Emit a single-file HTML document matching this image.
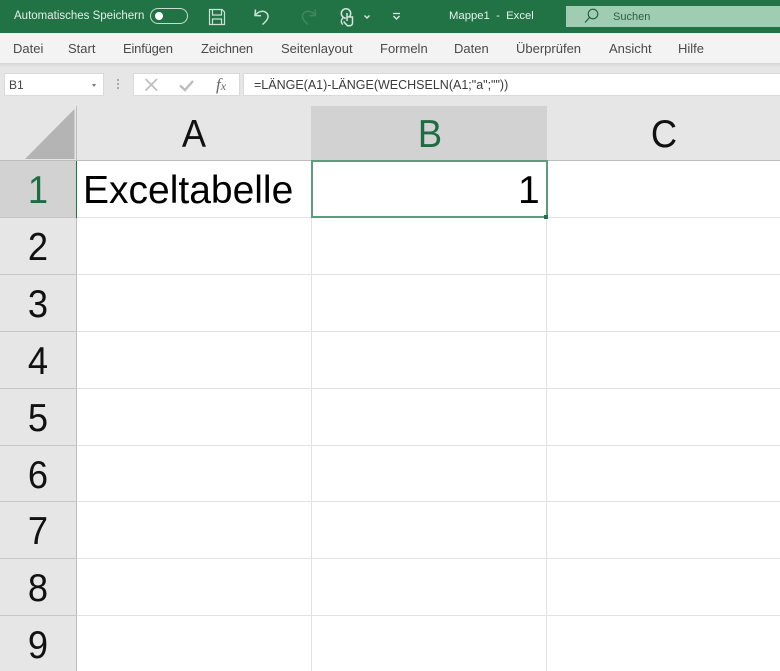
<!DOCTYPE html>
<html lang="de"><head><meta charset="utf-8"><title>Mappe1 - Excel</title>
<style>
*{box-sizing:border-box}
html,body{margin:0;padding:0}
body{width:780px;height:671px;overflow:hidden;position:relative;background:#fff;font-family:"Liberation Sans",sans-serif}
#w{position:absolute;left:0;top:0;width:780px;height:671px;overflow:hidden;filter:blur(.35px)}
.a{position:absolute}
.t{position:absolute;white-space:nowrap;line-height:1}
.tab{top:42px;font-size:13px;color:#4a4a4a}
.h{font-size:39px;color:#111;line-height:1;position:absolute;white-space:nowrap;transform:translateX(-50%) scaleX(.93)}
.rl{position:absolute;left:0;width:77px;height:1px;background:#c6c6c6}
.gl{position:absolute;left:77px;right:0;height:1px;background:#e2e2e2}
.vl{position:absolute;top:161px;bottom:0;width:1px;background:#e2e2e2}
</style></head><body><div id="w">
<div class="a" style="left:0;top:0;width:780px;height:33px;background:#217346"></div>
<div class="t" style="left:14px;top:11px;font-size:11.500px;color:#e4eee8">Automatisches Speichern</div>
<div class="a" style="left:150px;top:8px;width:38px;height:16px;border:1px solid #c9dcd0;border-radius:8px"></div>
<div class="a" style="left:155px;top:12px;width:8px;height:8px;border-radius:50%;background:#fff"></div>
<svg class="a" style="left:0;top:0" width="780" height="33" fill="none" stroke-width="1.200">
<g stroke="#cfe0d6">
<path d="M209.500 9.500H222L224.500 12V24.500H209.500Z"/><path d="M212.500 9.500V15H221.500V9.500M212.500 24.500V19H221.500V24.500"/>
<path d="M255.500 9.500L255 15.500L261 15.800M255 15.500C258 11.500 263 10 266 12.500C270 15.500 268 20 262.500 24.500" stroke-width="1.500"/>
</g>
<path d="M315 9.500L315.500 15.500L309.500 15.800M315.500 15.500C312.500 11.500 307.500 10 304.500 12.500C300.500 15.500 302.500 20 308 24.500" stroke="#3f8860" stroke-width="1.500"/>
<g stroke="#d6e5dc">
<circle cx="346" cy="13.500" r="4.700" stroke-width="1.500"/><path d="M343 18C341 19.500 340.500 23 343 24.500" stroke-width="1.300"/>
<path d="M347 13V21M347 17H352.500V23C352.500 25 351 25.800 349 25.800H347.500L343.500 21.500" fill="#217346" stroke-width="1.500"/>
<path d="M364.500 15.500L367 18L369.500 15.500" stroke-width="1.500"/>
<path d="M393 13.500H400" stroke-width="1.300"/><path d="M393.500 16L396.500 19L399.500 16" stroke-width="1.500"/>
</g>
</svg>
<div class="t" style="left:449px;top:11px;font-size:11.300px;color:#e8f1ec">Mappe1 &nbsp;-&nbsp; Excel</div>
<div class="a" style="left:566px;top:6px;width:214px;height:21px;background:#a0cdb2"></div>
<svg class="a" style="left:583px;top:7px" width="18" height="18" fill="none" stroke="#1d5b39" stroke-width="1.100"><circle cx="10" cy="7" r="4.800"/><path d="M6.500 10.500L2 15.500"/></svg>
<div class="t" style="left:613px;top:12px;font-size:11px;color:#2d5f43">Suchen</div>

<div class="a" style="left:0;top:33px;width:780px;height:30px;background:#f3f3f3"></div>
<div class="a" style="left:0;top:63px;width:780px;height:4px;background:linear-gradient(#d4d4d4,#e6e6e6)"></div>
<div class="t tab" style="left:13px">Datei</div>
<div class="t tab" style="left:68px">Start</div>
<div class="t tab" style="left:123px;letter-spacing:-.2px">Einfügen</div>
<div class="t tab" style="left:201px;letter-spacing:-.2px">Zeichnen</div>
<div class="t tab" style="left:281px">Seitenlayout</div>
<div class="t tab" style="left:380px">Formeln</div>
<div class="t tab" style="left:454px">Daten</div>
<div class="t tab" style="left:516px">Überprüfen</div>
<div class="t tab" style="left:609px">Ansicht</div>
<div class="t tab" style="left:678px">Hilfe</div>

<div class="a" style="left:0;top:67px;width:780px;height:39px;background:#e6e6e6"></div>
<div class="a" style="left:4px;top:73px;width:100px;height:23px;background:#fff;border:1px solid #dadada"></div>
<div class="t" style="left:9px;top:79px;font-size:12px;color:#444">B1</div>
<div class="a" style="left:92px;top:84px;border-left:2.500px solid transparent;border-right:2.500px solid transparent;border-top:3px solid #777"></div>
<div class="a" style="left:117px;top:79px;width:2px;height:2px;background:#aaa;box-shadow:0 4px #aaa,0 8px #aaa"></div>
<div class="a" style="left:133px;top:73px;width:107px;height:23px;background:#fff;border:1px solid #dadada"></div>
<svg class="a" style="left:133px;top:73px" width="107" height="23" fill="none" stroke="#bdbdbd" stroke-width="1.600"><path d="M12.500 6L24 17.500M24 6L12.500 17.500"/><path d="M47 12.500L52 17L60 8" stroke-width="2.400"/></svg>
<div class="t" style="left:216px;top:75px;font:italic 17px 'Liberation Serif',serif;color:#666">f<span style="font-size:12px">x</span></div>
<div class="a" style="left:243px;top:73px;width:537px;height:23px;background:#fff;border:1px solid #dadada;border-right:0"></div>
<div class="t" style="left:254px;top:79px;font-size:12.500px;color:#3a3a3a">=LÄNGE(A1)-LÄNGE(WECHSELN(A1;"a";""))</div>

<div class="a" style="left:0;top:106px;width:780px;height:55px;background:#e6e6e6"></div>
<div class="a" style="left:0;top:106px;width:77px;height:565px;background:#e6e6e6"></div>
<div class="a" style="left:311px;top:106px;width:236px;height:55px;background:#d2d2d2"></div>
<div class="a" style="left:0;top:160px;width:780px;height:1px;background:#bdbdbd"></div>
<div class="a" style="left:76px;top:106px;width:1px;height:565px;background:#bdbdbd"></div>
<svg class="a" style="left:0;top:106px" width="77" height="55"><path d="M25 53H74.500V3Z" fill="#b4b4b4"/></svg>
<div class="a" style="left:0;top:161px;width:76px;height:57px;background:#d2d2d2"></div>

<div class="gl" style="top:217px"></div><div class="gl" style="top:274px"></div><div class="gl" style="top:331px"></div><div class="gl" style="top:388px"></div><div class="gl" style="top:445px"></div><div class="gl" style="top:501px"></div><div class="gl" style="top:558px"></div><div class="gl" style="top:615px"></div>
<div class="rl" style="top:217px"></div><div class="rl" style="top:274px"></div><div class="rl" style="top:331px"></div><div class="rl" style="top:388px"></div><div class="rl" style="top:445px"></div><div class="rl" style="top:501px"></div><div class="rl" style="top:558px"></div><div class="rl" style="top:615px"></div>
<div class="vl" style="left:311px"></div><div class="vl" style="left:546px"></div>

<div class="h" style="left:194px;top:115px">A</div>
<div class="h" style="left:430px;top:115px;color:#1f6b43">B</div>
<div class="h" style="left:664px;top:115px">C</div>
<div class="h" style="left:38px;top:171px;color:#1f6b43">1</div>
<div class="h" style="left:38px;top:228px">2</div>
<div class="h" style="left:38px;top:285px">3</div>
<div class="h" style="left:38px;top:342px">4</div>
<div class="h" style="left:38px;top:399px">5</div>
<div class="h" style="left:38px;top:456px">6</div>
<div class="h" style="left:38px;top:512px">7</div>
<div class="h" style="left:38px;top:569px">8</div>
<div class="h" style="left:38px;top:626px">9</div>

<div class="a" style="left:76px;top:161px;width:1px;height:57px;background:#217346"></div>
<div class="t" style="left:83px;top:171px;font-size:39px;color:#000">Exceltabelle</div>
<div class="a" style="left:311px;top:160px;width:237px;height:58px;border:2px solid #5c9c7b"></div>
<div class="t" style="left:518px;top:171px;font-size:39px;color:#000">1</div>
<div class="a" style="left:544px;top:215px;width:4px;height:4px;background:#217346"></div>
</div></body></html>
